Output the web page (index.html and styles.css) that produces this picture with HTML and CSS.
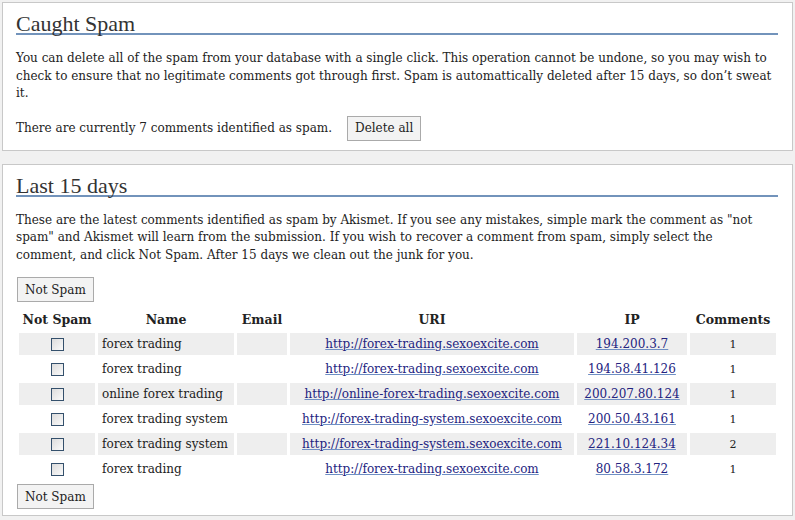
FILE: index.html
```html
<!DOCTYPE html>
<html>
<head>
<meta charset="utf-8">
<link rel="stylesheet" href="styles.css">
</head>
<body>
<div class="panel panel-top">
  <h2 class="title">Caught Spam</h2>
  <p class="text">You can delete all of the spam from your database with a single click. This operation cannot be undone, so you may wish to check to ensure that no legitimate comments got through first. Spam is automattically deleted after 15 days, so don’t sweat it.</p>
  <div class="count-row">
    <span>There are currently 7 comments identified as spam.</span>
    <button class="btn">Delete all</button>
  </div>
</div>
<div class="panel panel-bottom">
  <h2 class="title">Last 15 days</h2>
  <p class="text">These are the latest comments identified as spam by Akismet. If you see any mistakes, simple mark the comment as "not spam" and Akismet will learn from the submission. If you wish to recover a comment from spam, simply select the comment, and click Not Spam. After 15 days we clean out the junk for you.</p>
  <button class="btn btn-top">Not Spam</button>
  <table class="spam">
    <colgroup>
      <col class="c-chk"><col class="c-name"><col class="c-email"><col class="c-uri"><col class="c-ip"><col class="c-num">
    </colgroup>
    <thead>
      <tr><th>Not Spam</th><th>Name</th><th>Email</th><th>URI</th><th>IP</th><th>Comments</th></tr>
    </thead>
    <tbody>
      <tr class="alt"><td class="chk"><span class="box"></span></td><td class="name">forex trading</td><td></td><td class="ctr"><a href="#">http://forex-trading.sexoexcite.com</a></td><td class="ctr"><a href="#">194.200.3.7</a></td><td class="ctr num">1</td></tr>
      <tr><td class="chk"><span class="box"></span></td><td class="name">forex trading</td><td></td><td class="ctr"><a href="#">http://forex-trading.sexoexcite.com</a></td><td class="ctr"><a href="#">194.58.41.126</a></td><td class="ctr num">1</td></tr>
      <tr class="alt"><td class="chk"><span class="box"></span></td><td class="name">online forex trading</td><td></td><td class="ctr"><a href="#">http://online-forex-trading.sexoexcite.com</a></td><td class="ctr"><a href="#">200.207.80.124</a></td><td class="ctr num">1</td></tr>
      <tr><td class="chk"><span class="box"></span></td><td class="name">forex trading system</td><td></td><td class="ctr"><a href="#">http://forex-trading-system.sexoexcite.com</a></td><td class="ctr"><a href="#">200.50.43.161</a></td><td class="ctr num">1</td></tr>
      <tr class="alt"><td class="chk"><span class="box"></span></td><td class="name">forex trading system</td><td></td><td class="ctr"><a href="#">http://forex-trading-system.sexoexcite.com</a></td><td class="ctr"><a href="#">221.10.124.34</a></td><td class="ctr num">2</td></tr>
      <tr><td class="chk"><span class="box"></span></td><td class="name">forex trading</td><td></td><td class="ctr"><a href="#">http://forex-trading.sexoexcite.com</a></td><td class="ctr"><a href="#">80.58.3.172</a></td><td class="ctr num">1</td></tr>
    </tbody>
  </table>
  <button class="btn btn-bottom">Not Spam</button>
</div>
</body>
</html>
```
FILE: styles.css
```css
html, body {
  margin: 0;
  padding: 0;
}
body {
  background: #f1f1f1;
  padding: 2px 2px 0 2px;
  font-family: "DejaVu Serif", serif;
  font-size: 12px;
  color: #222;
}
.panel {
  background: #fff;
  border: 1px solid #c8c8c8;
  padding: 0 13px;
}
.panel-top {
  padding-bottom: 9px;
}
.panel-bottom {
  margin-top: 13px;
  padding-bottom: 6px;
}
.title {
  font-family: "Liberation Serif", serif;
  font-weight: normal;
  font-size: 22px;
  line-height: 18px;
  color: #333;
  margin: 12px 1px 0 0;
  padding: 0;
  border-bottom: 2px solid #7293bb;
}
.text {
  margin: 15px 4px 0 0;
  line-height: 17.5px;
}
.count-row {
  display: flex;
  align-items: center;
  gap: 15px;
  margin-top: 13px;
}
.btn {
  font-family: "DejaVu Serif", serif;
  font-size: 12px;
  color: #222;
  background: #f3f3f3;
  border: 1px solid #aaa;
  border-radius: 0;
  height: 25px;
  padding: 0 7px;
  margin: 0;
}
.btn-top,
.btn-bottom {
  display: block;
  margin-left: 1px;
}
.btn-top {
  margin-top: 13px;
}
.btn-bottom {
  margin-top: 1px;
}
.spam {
  border-collapse: separate;
  border-spacing: 3px;
  table-layout: fixed;
  width: 763px;
  margin-top: 3px;
}
.c-chk { width: 76px; }
.c-name { width: 136px; }
.c-email { width: 50px; }
.c-uri { width: 284px; }
.c-ip { width: 110px; }
.c-num { width: 86px; }
.spam th {
  font-weight: bold;
  font-size: 12.5px;
  height: 22px;
  padding: 0;
  text-align: center;
  color: #222;
  white-space: nowrap;
}
.spam td {
  height: 22px;
  padding: 0;
  white-space: nowrap;
}
.spam tr.alt td {
  background: #eeeeee;
}
.spam td.name {
  padding-left: 4px;
}
.spam td.ctr {
  text-align: center;
}
.spam td.num {
  font-size: 11px;
}
.spam td.chk {
  text-align: center;
}
.box {
  display: inline-block;
  width: 11px;
  height: 11px;
  border: 1px solid #34506c;
  background: linear-gradient(135deg, #dcdcdc, #fafafa);
  vertical-align: middle;
}
.spam a {
  color: #23237f;
  text-decoration: underline;
  text-decoration-color: #6f8fc4;
}
```
